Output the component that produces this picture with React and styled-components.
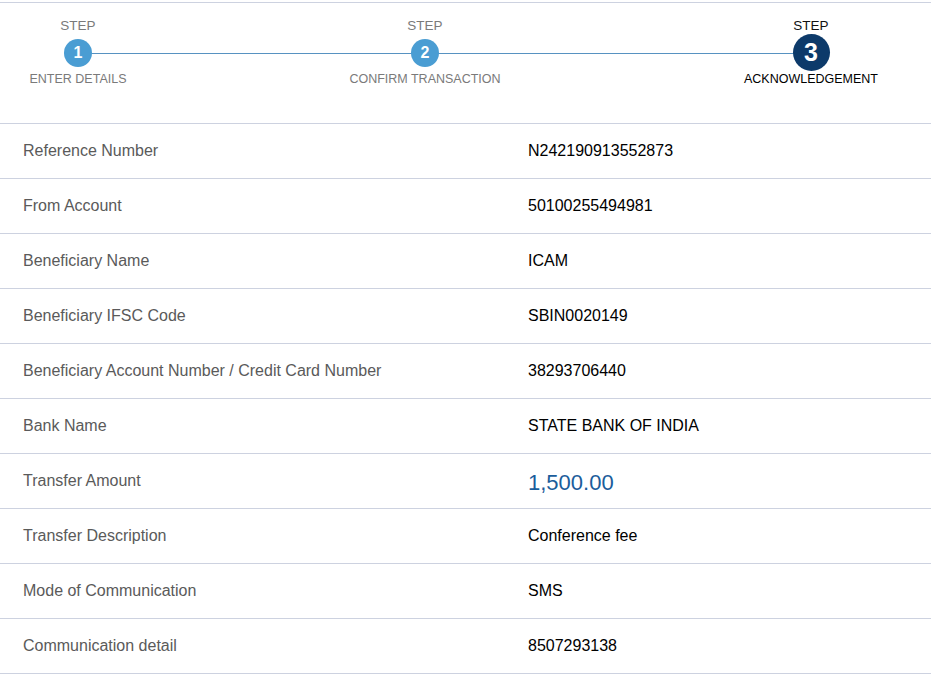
import React from "react";
import styled, { createGlobalStyle } from "styled-components";

const GlobalStyle = createGlobalStyle`
  html, body { margin: 0; padding: 0; background: #ffffff; }
  body { font-family: "Liberation Sans", Arial, sans-serif; }
`;

const Page = styled.div`
  width: 931px;
  padding-top: 2px;
  background: #fff;
`;

const Stepper = styled.div`
  position: relative;
  display: grid;
  grid-template-columns: 156px 538px 234px 1fr;
  height: 120px;
  border-top: 1px solid #cdd2e0;
  border-bottom: 1px solid #cdd2e0;
`;

const Track = styled.div`
  position: absolute;
  left: 78px;
  width: 733px;
  top: 50px;
  height: 1px;
  background: #5792c1;
`;

const Step = styled.div`
  position: relative;
  z-index: 1;
  display: flex;
  flex-direction: column;
  align-items: center;
  padding-top: 15px;
`;

const StepWord = styled.div`
  font-size: 13.5px;
  line-height: 16px;
  color: ${(p) => (p.$active ? "#111" : "#7a7a7a")};
`;

const Circle = styled.div`
  width: ${(p) => (p.$active ? "37px" : "28px")};
  height: ${(p) => (p.$active ? "37px" : "28px")};
  margin: ${(p) => (p.$active ? "0" : "5px 0 4px")};
  border-radius: 50%;
  background: ${(p) => (p.$active ? "#0d3a6a" : "#4a9dd3")};
  color: #fff;
  font-weight: bold;
  font-size: ${(p) => (p.$active ? "25px" : "16px")};
  line-height: 1;
  display: flex;
  align-items: center;
  justify-content: center;
`;

const StepLabel = styled.div`
  font-size: 12.5px;
  line-height: 16px;
  white-space: nowrap;
  color: ${(p) => (p.$active ? "#000" : "#7a7a7a")};
`;

const Row = styled.div`
  display: grid;
  grid-template-columns: 505px 1fr;
  align-items: center;
  height: 54px;
  padding-left: 23px;
  border-bottom: 1px solid #cdd2e0;
  font-size: 16px;
`;

const Label = styled.div`
  color: #5a5a5a;
`;

const Value = styled.div`
  color: ${(p) => (p.$amount ? "#1b5d9b" : "#000")};
  font-size: ${(p) => (p.$amount ? "22px" : "16px")};
  margin-top: ${(p) => (p.$amount ? "4px" : "0")};
`;

const steps = [
  { n: 1, label: "ENTER DETAILS" },
  { n: 2, label: "CONFIRM TRANSACTION" },
  { n: 3, label: "ACKNOWLEDGEMENT", active: true },
];

const rows = [
  ["Reference Number", "N242190913552873"],
  ["From Account", "50100255494981"],
  ["Beneficiary Name", "ICAM"],
  ["Beneficiary IFSC Code", "SBIN0020149"],
  ["Beneficiary Account Number / Credit Card Number", "38293706440"],
  ["Bank Name", "STATE BANK OF INDIA"],
  ["Transfer Amount", "1,500.00", true],
  ["Transfer Description", "Conference fee"],
  ["Mode of Communication", "SMS"],
  ["Communication detail", "8507293138"],
];

export default function App() {
  return (
    <>
      <GlobalStyle />
      <Page>
        <Stepper>
          <Track />
          {steps.map((s) => (
            <Step key={s.n} $active={s.active}>
              <StepWord $active={s.active}>STEP</StepWord>
              <Circle $active={s.active}>{s.n}</Circle>
              <StepLabel $active={s.active}>{s.label}</StepLabel>
            </Step>
          ))}
        </Stepper>
        {rows.map(([l, v, amt]) => (
          <Row key={l}>
            <Label>{l}</Label>
            <Value $amount={amt}>{v}</Value>
          </Row>
        ))}
      </Page>
    </>
  );
}
